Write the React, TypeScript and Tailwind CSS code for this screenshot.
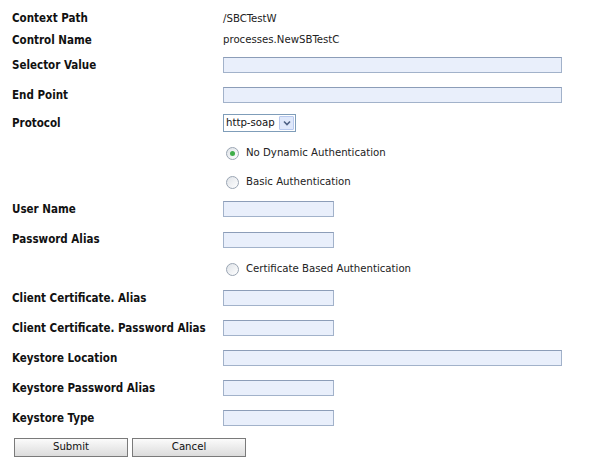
const font = { fontFamily: 'Tahoma, "DejaVu Sans Condensed", "DejaVu Sans", sans-serif' }

function TextInput({ wide }: { wide?: boolean }) {
  return (
    <div
      className={`h-[16px] border border-[#a2b2ca] border-t-[#8c9db8] bg-[#e9effb] ${wide ? "w-[339px]" : "w-[111px]"}`}
    />
  )
}

function Radio({ checked, label }: { checked?: boolean; label: string }) {
  return (
    <div className="flex items-center">
      <span className="ml-[3px] flex h-[13px] w-[13px] items-center justify-center rounded-full border border-[#9aa5b3] bg-gradient-to-br from-[#dfe3e8] to-white">
        {checked && <span className="h-[5px] w-[5px] rounded-full bg-[#3fae49]" />}
      </span>
      <span className="ml-[7px] pt-[1px] text-[11.3px] text-[#222]">{label}</span>
    </div>
  )
}

function Row({ h, label, children }: { h: string; label?: string; children?: React.ReactNode }) {
  return (
    <div className={`flex items-center ${h}`}>
      <div className="w-[211px] shrink-0 pt-[1px] text-[11.5px] font-bold text-[#111]">{label}</div>
      <div className="flex items-center">{children}</div>
    </div>
  )
}

export default function App() {
  return (
    <div className="h-[463px] w-[601px] bg-white pl-[12px] pt-[7px]" style={font}>
      <Row h="h-[23px]" label="Context Path">
        <span className="pt-[1px] text-[11.3px] text-[#222]">/SBCTestW</span>
      </Row>
      <Row h="h-[20px]" label="Control Name">
        <span className="pt-[1px] text-[11.3px] text-[#222]">processes.NewSBTestC</span>
      </Row>
      <Row h="h-[30px]" label="Selector Value">
        <TextInput wide />
      </Row>
      <Row h="h-[30px]" label="End Point">
        <TextInput wide />
      </Row>
      <Row h="h-[26px]" label="Protocol">
        <div className="flex h-[18px] w-[73px] items-center border border-[#7f9db9] bg-white">
          <span className="flex-1 pl-[2px] text-[11.3px] text-[#111]">http-soap</span>
          <span className="m-[1px] flex h-[14px] w-[15px] items-center justify-center rounded-[1px] border border-[#b8c9ee] bg-[#dfe8fb]">
            <svg width="8" height="6" viewBox="0 0 8 6">
              <path d="M1 1.5 L4 4.5 L7 1.5" fill="none" stroke="#4d6185" strokeWidth="1.6" />
            </svg>
          </span>
        </div>
      </Row>
      <Row h="h-[34px]">
        <Radio checked label="No Dynamic Authentication" />
      </Row>
      <Row h="h-[24px]">
        <Radio label="Basic Authentication" />
      </Row>
      <Row h="h-[30px]" label="User Name">
        <TextInput />
      </Row>
      <Row h="h-[31px]" label="Password Alias">
        <TextInput />
      </Row>
      <Row h="h-[28px]">
        <Radio label="Certificate Based Authentication" />
      </Row>
      <Row h="h-[30px]" label="Client Certificate. Alias">
        <TextInput />
      </Row>
      <Row h="h-[30px]" label="Client Certificate. Password Alias">
        <TextInput />
      </Row>
      <Row h="h-[30px]" label="Keystore Location">
        <TextInput wide />
      </Row>
      <Row h="h-[30px]" label="Keystore Password Alias">
        <TextInput />
      </Row>
      <Row h="h-[30px]" label="Keystore Type">
        <TextInput />
      </Row>
      <div className="flex h-[29px] items-center gap-[4px] pl-[2px]">
        <button className="h-[19px] w-[114px] border border-[#7a7a7a] bg-gradient-to-b from-[#fbfbfb] to-[#dcdcdc] text-[11.3px] text-[#111]">
          Submit
        </button>
        <button className="h-[19px] w-[114px] border border-[#7a7a7a] bg-gradient-to-b from-[#fbfbfb] to-[#dcdcdc] text-[11.3px] text-[#111]">
          Cancel
        </button>
      </div>
    </div>
  )
}
